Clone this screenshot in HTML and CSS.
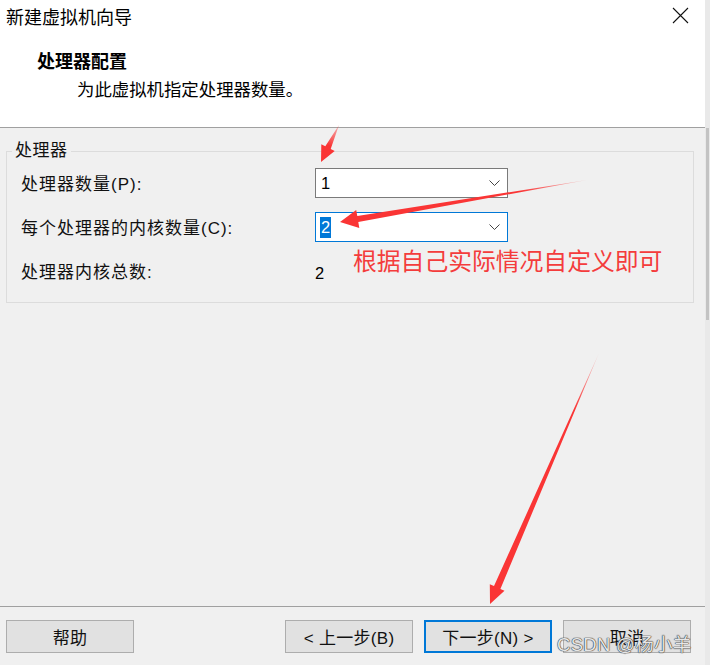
FILE: index.html
```html
<!DOCTYPE html>
<html lang="zh-CN">
<head>
<meta charset="utf-8">
<title>新建虚拟机向导</title>
<link rel="stylesheet" href="styles.css">
</head>
<body>
<div class="window">
  <div class="dialog">
    <header class="header">
      <div class="titlebar">
        <span class="title">新建虚拟机向导</span>
        <svg class="close" width="17" height="17" viewBox="0 0 17 17"><path d="M1 1L16 16M16 1L1 16" stroke="#111" stroke-width="1.1" fill="none"/></svg>
      </div>
      <div class="heading">处理器配置</div>
      <div class="subheading">为此虚拟机指定处理器数量。</div>
    </header>
    <main class="content">
      <fieldset class="group">
        <legend class="legend">处理器</legend>
        <div class="grid">
          <div class="label">处理器数量(P):</div>
          <div class="combo">
            <span class="val">1</span>
            <svg class="chev" width="11" height="7" viewBox="0 0 11 7"><polyline points="0.5,0.5 5.5,5.5 10.5,0.5" stroke="#444" stroke-width="1" fill="none"/></svg>
          </div>
          <div class="label">每个处理器的内核数量(C):</div>
          <div class="combo combo-focus">
            <span class="val val-sel">2</span>
            <svg class="chev" width="11" height="7" viewBox="0 0 11 7"><polyline points="0.5,0.5 5.5,5.5 10.5,0.5" stroke="#444" stroke-width="1" fill="none"/></svg>
          </div>
          <div class="label">处理器内核总数:</div>
          <div class="value">2</div>
        </div>
      </fieldset>
    </main>
    <footer class="footer">
      <button class="btn">帮助</button>
      <div class="spacer"></div>
      <button class="btn">&lt; 上一步(B)</button>
      <button class="btn btn-primary">下一步(N) &gt;</button>
      <button class="btn">取消</button>
    </footer>
  </div>
  <div class="scrollbar"><div class="thumb"></div></div>
</div>

<svg class="arrows" width="710" height="665" viewBox="0 0 710 665">
  <defs>
    <linearGradient id="g1" gradientUnits="userSpaceOnUse" x1="339" y1="125" x2="330" y2="146">
      <stop offset="0" stop-color="#fa3535" stop-opacity="0.3"/>
      <stop offset="1" stop-color="#fa3535"/>
    </linearGradient>
    <linearGradient id="g2" gradientUnits="userSpaceOnUse" x1="587" y1="180" x2="520" y2="192">
      <stop offset="0" stop-color="#fa3535" stop-opacity="0.2"/>
      <stop offset="1" stop-color="#fa3535"/>
    </linearGradient>
    <linearGradient id="g3" gradientUnits="userSpaceOnUse" x1="599" y1="353" x2="575" y2="410">
      <stop offset="0" stop-color="#fa3535" stop-opacity="0.15"/>
      <stop offset="1" stop-color="#fa3535"/>
    </linearGradient>
  </defs>
  <polygon fill="url(#g1)" points="339,125 330.7,148.9 334.7,150.9 321,162 321.3,144.3 325.3,146.3"/>
  <polygon fill="url(#g2)" points="587,180 358.3,221.9 359.3,227.9 340,222 356.2,210.1 357.3,216.0"/>
  <polygon fill="url(#g3)" points="599,353 500.4,588.9 504.5,590.7 490,604 489.8,584.3 494.0,586.1"/>
</svg>
<div class="note">根据自己实际情况自定义即可</div>
<div class="watermark">CSDN @杨小羊</div>
</body>
</html>
```
FILE: styles.css
```css
* { box-sizing: border-box; }

html, body {
  margin: 0;
  padding: 0;
}

body {
  width: 710px;
  height: 665px;
  overflow: hidden;
  background: #f0f0f0;
  font-family: "Liberation Sans", "Noto Sans CJK SC", sans-serif;
  color: #000;
  position: relative;
}

.window {
  display: flex;
  width: 710px;
  height: 665px;
}

.dialog {
  width: 705px;
  height: 665px;
  display: flex;
  flex-direction: column;
  background: #f0f0f0;
}

.header {
  height: 128px;
  flex: none;
  background: #fff;
  border-bottom: 1px solid #a0a0a0;
}

.titlebar {
  display: flex;
  justify-content: space-between;
  align-items: flex-start;
  padding: 6px 16px 0 6px;
}

.title {
  font-family: "Noto Sans CJK SC", sans-serif;
  font-size: 18px;
  line-height: 20px;
}

.close {
  margin-top: 1px;
  display: block;
}

.heading {
  margin-top: 22px;
  padding-left: 37px;
  font-family: "Noto Sans CJK SC", sans-serif;
  font-weight: bold;
  font-size: 18px;
  line-height: 24px;
}

.subheading {
  margin-top: 5px;
  padding-left: 77px;
  font-family: "Noto Sans CJK SC", sans-serif;
  font-size: 17.4px;
  line-height: 24px;
}

.content {
  flex: 1;
  padding-top: 13px;
}

.group {
  margin: 0 11px 0 6px;
  padding: 0;
  border: 1px solid #dcdcdc;
  min-width: 0;
}

.legend {
  margin-left: 5px;
  padding: 0 3px;
  font-size: 17px;
  line-height: 20px;
  letter-spacing: 0.5px;
  color: #111;
}

.grid {
  display: grid;
  grid-template-columns: 294px 193px;
  grid-auto-rows: 30px;
  row-gap: 14px;
  padding: 7px 0 16px 14px;
  align-items: center;
}

.label {
  font-size: 17px;
  line-height: 20px;
  letter-spacing: 1px;
  padding-top: 3px;
  color: #111;
}

.combo {
  height: 30px;
  background: #fff;
  border: 1px solid #7a7a7a;
  display: flex;
  align-items: center;
  justify-content: space-between;
  padding: 0 7px 0 5px;
}

.combo-focus {
  border-color: #0078d7;
  padding-left: 4px;
}

.val {
  font-size: 16.5px;
  line-height: 21px;
  display: inline-block;
}

.val-sel {
  background: #0078d7;
  color: #fff;
  padding: 0 1px;
}

.chev {
  display: block;
}

.value {
  font-size: 16.5px;
  line-height: 20px;
  padding-top: 3px;
}

.footer {
  flex: none;
  height: 59px;
  border-top: 1px solid #a0a0a0;
  display: flex;
  align-items: flex-start;
  gap: 11px;
  padding: 13px 14px 0 6px;
}

.spacer {
  flex: 1;
}

.btn {
  width: 128px;
  height: 33px;
  margin: 0;
  padding: 0;
  background: #e1e1e1;
  border: 1px solid #adadad;
  font-family: "Liberation Sans", "Noto Sans CJK SC", sans-serif;
  font-size: 17px;
  letter-spacing: 0.3px;
  color: #111;
}

.btn-primary {
  border: 2px solid #0078d7;
}

.scrollbar {
  width: 5px;
  height: 665px;
  background: #e9e9e9;
  padding-top: 128px;
  padding-left: 1px;
}

.thumb {
  width: 3px;
  height: 192px;
  background: #c3c3c3;
}

.arrows {
  position: absolute;
  left: 0;
  top: 0;
  pointer-events: none;
}

.note {
  position: absolute;
  left: 353px;
  top: 246px;
  font-family: "Noto Sans CJK SC", sans-serif;
  font-size: 23.8px;
  line-height: 28px;
  color: #f43c3c;
  white-space: nowrap;
}

.watermark {
  position: absolute;
  left: 557px;
  top: 633px;
  font-family: "Liberation Sans", "Noto Sans CJK SC", sans-serif;
  font-size: 18.5px;
  line-height: 24px;
  letter-spacing: 0.3px;
  color: rgba(248, 248, 248, 0.92);
  text-shadow: 0 0 1px #3a3a3a, 0 0 1px #3a3a3a, 0 0 1px #3a3a3a;
  white-space: nowrap;
}
```
